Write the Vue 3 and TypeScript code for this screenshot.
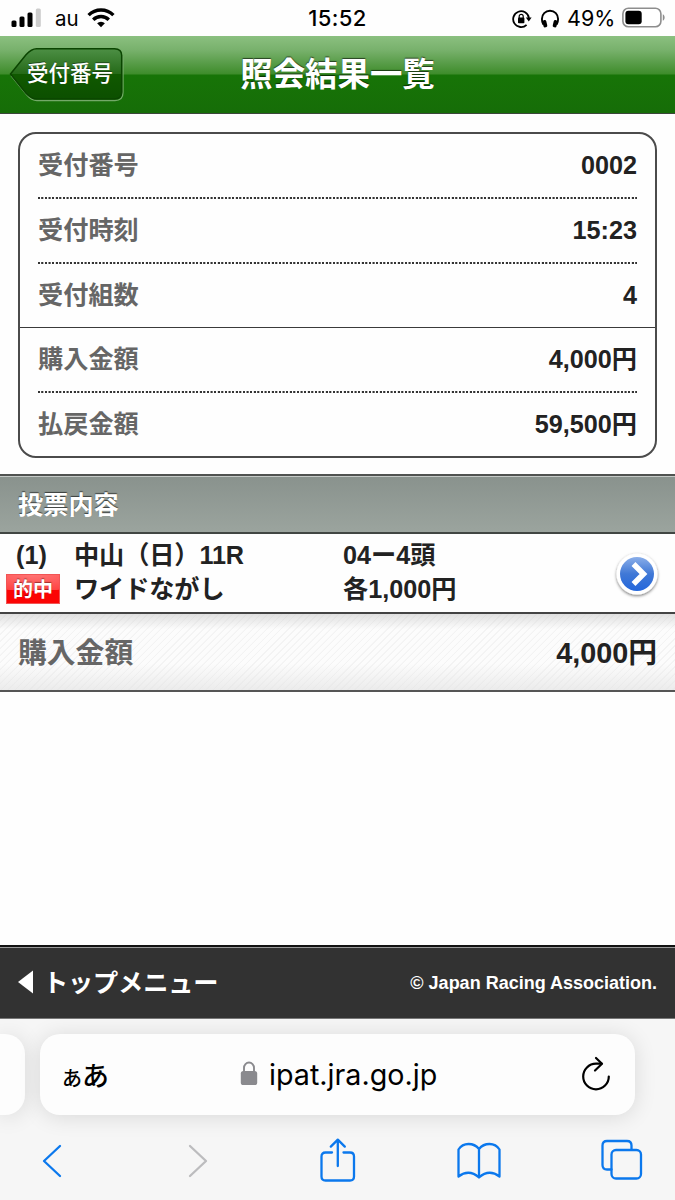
<script setup lang="ts">
interface Row {
  label: string
  value: string
  divider: 'dotted' | 'solid' | 'none'
}

const rows: Row[] = [
  { label: '受付番号', value: '0002', divider: 'dotted' },
  { label: '受付時刻', value: '15:23', divider: 'dotted' },
  { label: '受付組数', value: '4', divider: 'solid' },
  { label: '購入金額', value: '4,000円', divider: 'dotted' },
  { label: '払戻金額', value: '59,500円', divider: 'none' },
]
</script>

<template>
  <div class="screen">
    <div class="status">
      <div class="status-left">
        <svg class="signal" width="31" height="20" viewBox="0 0 31 20">
          <rect x="0.5" y="12.5" width="5" height="6.5" rx="1.5" />
          <rect x="8.5" y="8.5" width="5" height="10.5" rx="1.5" />
          <rect x="16.5" y="4.5" width="5" height="14.5" rx="1.5" />
          <rect x="24.8" y="0.5" width="5" height="18.5" rx="1.5" fill="#ccc" />
        </svg>
        <span class="carrier">au</span>
        <svg class="wifi" width="28" height="21" viewBox="0 0 28 21" fill="none" stroke="#000" stroke-width="3.4">
          <path d="M1.6 8.1a17.6 17.6 0 0 1 24.8 0" />
          <path d="M6.2 12.7a11.2 11.2 0 0 1 15.6 0" />
          <path d="M14 20.3l-3.9-4a5.6 5.6 0 0 1 7.8 0z" fill="#000" stroke="none" />
        </svg>
      </div>
      <span class="clock">15:52</span>
      <div class="status-right">
        <svg width="20" height="20" viewBox="0 0 20 20">
          <path d="M14.6 15.8A7.9 7.9 0 1 1 16.9 9" fill="none" stroke="#000" stroke-width="1.8" />
          <path d="M13.8 8.6h5.8l-2.8 4z" />
          <rect x="6" y="8.6" width="6.4" height="5.6" rx="0.8" />
          <path d="M7.2 9V7.3a2 2 0 0 1 4 0V9" fill="none" stroke="#000" stroke-width="1.2" />
        </svg>
        <svg class="headphones" width="18" height="20" viewBox="0 0 18 20">
          <path d="M2.300 15.500C0.300 12 0.500 7 3.200 4.200A8 8 0 0 1 14.800 4.200C17.500 7 17.700 12 15.700 15.500" fill="none" stroke="#000" stroke-width="1.900" />
          <rect x="2" y="11" width="3.900" height="7.400" rx="1.700" transform="rotate(-14 4 15)" />
          <rect x="12.100" y="11" width="3.900" height="7.400" rx="1.700" transform="rotate(14 14 15)" />
        </svg>
        <span class="percent">49%</span>
        <svg class="battery" width="44" height="22" viewBox="0 0 44 22">
          <rect x="0.9" y="1.2" width="38" height="18.6" rx="5.5" fill="#fff" stroke="#8d8d8d" stroke-width="1.6" />
          <rect x="3.4" y="3.8" width="16.3" height="13.4" rx="3" />
          <path d="M40.8 7.3c2.4.7 2.4 5.7 0 6.4z" fill="#8d8d8d" />
        </svg>
      </div>
    </div>

    <header class="header">
      <div class="back">
        <svg class="back-shape" width="116" height="56" viewBox="0 0 116 56">
          <defs>
            <linearGradient id="backFill" x1="0" y1="0" x2="0" y2="1">
              <stop offset="0" stop-color="#4d8f45" />
              <stop offset="0.5" stop-color="#256a18" />
              <stop offset="0.51" stop-color="#105900" />
              <stop offset="1" stop-color="#0c4f00" />
            </linearGradient>
          </defs>
          <path d="M2 29.500L17.500 48.500Q22.500 54.500 28 54.500H106Q114 54.500 114 46.500V10" fill="none" stroke="#73a968" stroke-width="1.300" />
          <path d="M1.500 28L17 8.800Q22.500 2.700 27.500 2.700H105.500Q112.700 2.700 112.700 9.500V46Q112.700 53 105.500 53H27.500Q22.500 53 17 47.200Z" fill="url(#backFill)" stroke="#0b4501" stroke-width="1.500" />
        </svg>
        <span class="back-text">受付番号</span>
      </div>
      <h1 class="title">照会結果一覧</h1>
    </header>

    <main class="content">
      <section class="card">
        <div v-for="row in rows" :key="row.label" class="row" :class="row.divider">
          <span class="label">{{ row.label }}</span>
          <span class="value">{{ row.value }}</span>
        </div>
      </section>

      <h2 class="section">投票内容</h2>

      <section class="bet">
        <div class="bet-index">
          <span class="number">(1)</span>
          <span class="hit">的中</span>
        </div>
        <div class="bet-race">
          <span>中山（日）11R</span>
          <span>ワイドながし</span>
        </div>
        <div class="bet-detail">
          <span>04ー4頭</span>
          <span>各1,000円</span>
        </div>
        <svg class="go" width="50" height="50" viewBox="0 0 50 50">
          <defs>
            <linearGradient id="goFill" x1="0" y1="0" x2="0" y2="1">
              <stop offset="0" stop-color="#8aaee9" />
              <stop offset="0.5" stop-color="#4078d6" />
              <stop offset="1" stop-color="#2467dc" />
            </linearGradient>
            <filter id="goShadow" x="-20%" y="-20%" width="140%" height="140%">
              <feDropShadow dx="0" dy="1.300" stdDeviation="1.500" flood-color="#000" flood-opacity="0.550" />
            </filter>
          </defs>
          <circle cx="25" cy="24" r="20.500" fill="#fff" filter="url(#goShadow)" />
          <circle cx="25" cy="24" r="17" fill="url(#goFill)" />
          <path d="M21.500 14L31.500 24L21.500 34" fill="none" stroke="#fff" stroke-width="5.500" />
        </svg>
      </section>

      <section class="total">
        <span class="label">購入金額</span>
        <span class="value">4,000円</span>
      </section>
    </main>

    <footer class="footer">
      <svg class="triangle" width="15" height="24" viewBox="0 0 15 24"><path d="M0 12L15 0.500V23.500Z" fill="#fff" /></svg>
      <span class="menu">トップメニュー</span>
      <span class="copyright">© Japan Racing Association.</span>
    </footer>

    <nav class="browser">
      <div class="tabs">
        <div class="tab-prev"></div>
        <div class="address">
          <span class="reader"><small>あ</small>あ</span>
          <div class="url">
            <svg width="18" height="25" viewBox="0 0 18 25">
              <rect x="0.800" y="10" width="16.400" height="14" rx="2.600" fill="#8a8a8e" />
              <path d="M4 11V6.800a5 5.300 0 0 1 10 0V11" fill="none" stroke="#8a8a8e" stroke-width="1.900" />
            </svg>
            <span>ipat.jra.go.jp</span>
          </div>
          <svg class="reload" width="30" height="36" viewBox="0 0 30 36" fill="none" stroke="#000" stroke-width="2.200" stroke-linecap="round" stroke-linejoin="round">
            <path d="M20.500 7.700H15A12.800 12.800 0 1 0 27.800 20.500" />
            <path d="M15 2L21 7.800L14 14.500" />
          </svg>
        </div>
      </div>
      <div class="tools">
        <svg width="20" height="34" viewBox="0 0 20 34" class="tool back-arrow"><path d="M18 2L2 17L18 32" /></svg>
        <svg width="20" height="34" viewBox="0 0 20 34" class="tool forward-arrow"><path d="M2 2L18 17L2 32" /></svg>
        <svg width="36" height="46" viewBox="0 0 36 46" class="tool share">
          <path d="M12 15.500H5.500Q1.500 15.500 1.500 19.500V39.500Q1.500 43.500 5.500 43.500H30Q34 43.500 34 39.500V19.500Q34 15.500 30 15.500H23.500" />
          <path d="M17.800 29V3M10.800 9.600L17.800 2.600L24.800 9.600" />
        </svg>
        <svg width="44" height="38" viewBox="0 0 44 38" class="tool book">
          <path d="M22 35.500Q12 26.500 1.500 34.500V7.500Q5 2 11.500 2T22 7V35.500Q32 26.500 42.500 34.500V7.500Q39 2 32.500 2T22 7" />
        </svg>
        <svg width="42" height="42" viewBox="0 0 42 42" class="tool windows">
          <path d="M10.500 30.500H6Q1.500 30.500 1.500 26V6.500Q1.500 2 6 2H26Q30.500 2 30.500 6.500V10.500" />
          <rect x="10.500" y="11" width="29.500" height="28.500" rx="4.500" />
        </svg>
      </div>
    </nav>
  </div>
</template>

<style>
html,
body {
  margin: 0;
  background: #fefefe;
}
</style>

<style scoped>
.screen {
  width: 675px;
  height: 1200px;
  display: flex;
  flex-direction: column;
  overflow: hidden;
  background: #fefefe;
  color: #222;
  font-family: "Liberation Sans", "Noto Sans CJK JP", sans-serif;
  white-space: nowrap;
}
svg {
  display: block;
  flex: none;
}
.status {
  height: 36px;
  display: grid;
  grid-template-columns: 1fr auto 1fr;
  font-family: Inter, sans-serif;
  font-size: 22px;
  line-height: 37px;
  color: #000;
}
.status-left {
  display: flex;
  padding-left: 11px;
}
.signal {
  margin-top: 8px;
}
.carrier {
  margin-left: 13px;
  width: 32px;
  font-size: 20.500px;
}
.wifi {
  margin-top: 7px;
}
.clock {
  font-size: 22px;
  font-weight: 500;
  letter-spacing: 0.400px;
}
.status-right {
  display: flex;
  justify-content: flex-end;
  padding-right: 9px;
}
.status-right > svg {
  margin-top: 9px;
}
.status-right > .headphones {
  margin-left: 9px;
}
.percent {
  margin-left: 8px;
  width: 47px;
  font-size: 21.500px;
}
.status-right > .battery {
  margin-left: 8px;
  margin-top: 7px;
}
.header {
  height: 78px;
  box-sizing: border-box;
  border-bottom: 1px solid #3b463a;
  background: linear-gradient(#8bc080 0, #78b16c 14px, #3e8c2b 38px, #177407 39px, #166d08 100%);
  display: grid;
  grid-template-columns: 1fr auto 1fr;
  align-items: start;
}
.back {
  position: relative;
  margin: 10px 0 0 9px;
  width: 116px;
  height: 56px;
}
.back-shape {
  position: absolute;
  inset: 0;
}
.back-text {
  position: relative;
  display: block;
  padding-left: 18px;
  line-height: 57px;
  font-size: 21.500px;
  color: #fff;
  font-weight: 500;
  text-shadow: 0 -1px 0 rgba(0, 0, 0, 0.400);
}
.title {
  margin: 0;
  font-size: 32.400px;
  line-height: 78px;
  color: #fff;
  font-weight: 700;
  text-shadow: 0 -1px 1px rgba(0, 0, 0, 0.600);
}
.content {
  flex: 1;
  display: flex;
  flex-direction: column;
}
.card {
  margin: 18px 18px 16px;
  height: 326px;
  box-sizing: border-box;
  border: 2px solid #4b4b4b;
  border-radius: 18px;
  display: flex;
  flex-direction: column;
  font-size: 25.200px;
  font-weight: 700;
}
.row {
  flex: none;
  height: 64.800px;
  box-sizing: border-box;
  padding: 0 18px;
  line-height: 62.500px;
  display: flex;
  justify-content: space-between;
}
.row:last-child {
  height: 62px;
}
.row.dotted {
  background: repeating-linear-gradient(90deg, #333 0 1.500px, rgba(51, 51, 51, 0) 2.100px 3px, #333 3.600px) 18px 63px / 599px 2px no-repeat;
}
.row.solid {
  background: linear-gradient(#3a3a3a, #3a3a3a) 0 63px / 100% 2px no-repeat;
}
.label {
  color: #666;
}
.value {
  color: #222;
}
.section {
  margin: 0;
  height: 60px;
  box-sizing: border-box;
  border-top: 2px solid #505250;
  border-bottom: 2px solid #414643;
  box-shadow: inset 0 1px 0 #c5cac7;
  background: linear-gradient(#89928d, #9ba49e);
  padding-left: 18px;
  font-size: 25.200px;
  line-height: 58px;
  color: #fff;
  text-shadow: 0 -1px 1px rgba(0, 0, 0, 0.600);
}
.bet {
  height: 78px;
  display: flex;
  font-size: 25.200px;
  font-weight: 700;
  line-height: 34px;
}
.bet-index {
  width: 74px;
  padding-top: 4px;
}
.number {
  display: block;
  margin-left: 16px;
}
.hit {
  display: block;
  margin: 2px 0 0 6px;
  width: 54px;
  height: 30px;
  box-sizing: border-box;
  border: 1px solid #f15555;
  background: radial-gradient(ellipse 70px 16px at 50% 0, #ff7474 0, #ff4343 97%, #fb0404 100%);
  color: #fff;
  font-size: 20px;
  line-height: 30px;
  text-align: center;
  text-shadow: 0 -1px 1px rgba(70, 0, 0, 0.500);
}
.bet-race,
.bet-detail {
  display: flex;
  flex-direction: column;
  padding-top: 4px;
}
.bet-race {
  width: 269px;
  letter-spacing: -0.100px;
}
.go {
  margin: 16px 13px 0 auto;
}
.total {
  height: 80px;
  box-sizing: border-box;
  border-top: 2px solid #434343;
  border-bottom: 2px solid #555;
  padding: 0 18px;
  display: flex;
  justify-content: space-between;
  font-size: 28.800px;
  font-weight: 700;
  line-height: 79px;
  background:
    linear-gradient(rgba(205, 205, 205, 0.600), rgba(255, 255, 255, 0) 20%, rgba(255, 255, 255, 0) 65%, rgba(225, 225, 225, 0.600)),
    repeating-linear-gradient(135deg, #fcfcfc 0 3.500px, #f3f3f3 4.300px 5px);
}
.footer {
  height: 74px;
  box-sizing: border-box;
  border-top: 2px solid #111;
  border-bottom: 1px solid #777;
  box-shadow: inset 0 1px 0 #999;
  background: #323232;
  color: #fff;
  display: flex;
  font-weight: 700;
  padding: 0 18px;
  line-height: 72px;
}
.triangle {
  margin-top: 23px;
}
.menu {
  margin-left: 10px;
  font-size: 25.200px;
  letter-spacing: -0.150px;
}
.copyright {
  margin-left: auto;
  font-size: 18px;
}
.browser {
  height: 181px;
  background: #f6f6f6;
  overflow: hidden;
  display: flex;
  flex-direction: column;
}
.tabs {
  display: flex;
  padding-top: 15px;
}
.tab-prev {
  width: 25px;
  height: 81px;
  border-radius: 0 20px 20px 0;
  background: #fdfdfd;
  box-shadow: 0 2px 22px rgba(0, 0, 0, 0.120);
}
.address {
  margin-left: 15px;
  width: 595px;
  height: 81px;
  border-radius: 20px;
  background: #fdfdfd;
  box-shadow: 0 2px 22px rgba(0, 0, 0, 0.120);
  display: flex;
  color: #000;
}
.reader {
  width: 200px;
  box-sizing: border-box;
  padding-left: 22px;
  font-size: 27px;
  font-weight: 500;
  line-height: 82px;
  font-family: "Noto Sans CJK JP", sans-serif;
}
.reader small {
  font-size: 20px;
}
.url {
  display: flex;
  width: 341px;
  font-family: Inter, sans-serif;
  font-size: 28.700px;
  line-height: 82px;
}
.url svg {
  margin: 27px 11px 0 0;
}
.reload {
  margin-top: 22px;
}
.tools {
  display: flex;
}
.tool {
  fill: none;
  stroke: #0b78ed;
  stroke-width: 2.300;
  stroke-linecap: round;
  stroke-linejoin: round;
}
.back-arrow {
  margin: 29px 0 0 42px;
}
.forward-arrow {
  margin: 29px 0 0 126px;
  stroke: #bcbcbe;
}
.share {
  margin: 22px 0 0 112px;
}
.book {
  margin: 27px 0 0 101px;
}
.windows {
  margin: 24px 0 0 100px;
}
</style>
